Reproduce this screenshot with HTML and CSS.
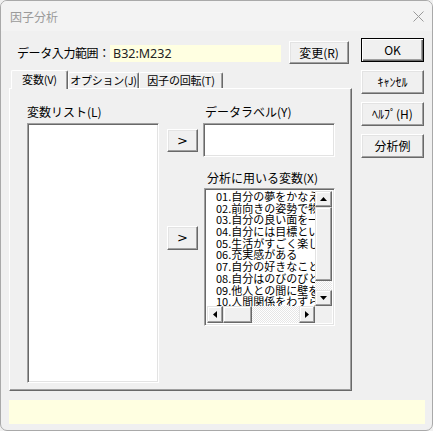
FILE: index.html
```html
<!DOCTYPE html>
<html lang="ja">
<head>
<meta charset="utf-8">
<title>因子分析</title>
<link rel="stylesheet" href="styles.css">
</head>
<body>
<div class="window">
  <div class="titlebar">
    <span class="title">因子分析</span>
    <svg class="close" width="11" height="11" viewBox="0 0 11 11"><path d="M0.5 0.5 L10.5 10.5 M10.5 0.5 L0.5 10.5" stroke="#9a9a9a" stroke-width="1" fill="none"/></svg>
  </div>
  <div class="main">
    <div class="left">
      <div class="range-row">
        <span class="range-label">データ入力範囲：</span>
        <div class="range-field">B32:M232</div>
        <button class="btn change">変更(R)</button>
      </div>
      <div class="tabs">
        <div class="tab tab1 active">変数(V)</div>
        <div class="tab tab2">オプション(J)</div>
        <div class="tab tab3">因子の回転(T)</div>
      </div>
      <div class="panel">
        <div class="col col-list">
          <div class="lbl">変数リスト(L)</div>
          <div class="sunken listbig"></div>
        </div>
        <div class="col col-arrows">
          <button class="btn arrow a1">&gt;</button>
          <button class="btn arrow a2">&gt;</button>
        </div>
        <div class="col col-right">
          <div class="lbl lbl-y">データラベル(Y)</div>
          <div class="sunken textbox"></div>
          <div class="lbl lbl-x">分析に用いる変数(X)</div>
          <div class="sunken vars">
            <div class="vars-grid">
              <ul class="items">
                <li>01.自分の夢をかなえようとしている</li>
                <li>02.前向きの姿勢で物事に取り組む</li>
                <li>03.自分の良い面を一番に考える</li>
                <li>04.自分には目標というものがある</li>
                <li>05.生活がすごく楽しいと感じる</li>
                <li>06.充実感がある</li>
                <li>07.自分の好きなことがやれている</li>
                <li>08.自分はのびのびと生きている</li>
                <li>09.他人との間に壁を感じる</li>
                <li>10.人間関係をわずらわしいと感じる</li>
              </ul>
              <div class="vscroll">
                <div class="sb-btn"><svg width="7" height="4" viewBox="0 0 7 4"><polygon points="3.5,0 7,4 0,4" fill="#000"/></svg></div>
                <div class="sb-thumb v-thumb"></div>
                <div class="sb-track"></div>
                <div class="sb-btn"><svg width="7" height="4" viewBox="0 0 7 4"><polygon points="0,0 7,0 3.5,4" fill="#000"/></svg></div>
              </div>
              <div class="hscroll">
                <div class="sb-btn"><svg width="4" height="7" viewBox="0 0 4 7"><polygon points="4,0 4,7 0,3.5" fill="#000"/></svg></div>
                <div class="sb-thumb h-thumb"></div>
                <div class="sb-track"></div>
                <div class="sb-btn"><svg width="4" height="7" viewBox="0 0 4 7"><polygon points="0,0 4,3.5 0,7" fill="#000"/></svg></div>
              </div>
              <div class="corner"></div>
            </div>
          </div>
        </div>
      </div>
    </div>
    <div class="side">
      <button class="btn default">OK</button>
      <button class="btn">ｷｬﾝｾﾙ</button>
      <button class="btn">ﾍﾙﾌﾟ(H)</button>
      <button class="btn">分析例</button>
    </div>
  </div>
  <div class="status"></div>
</div>
</body>
</html>
```

FILE: styles.css
```css
html, body {
  margin: 0;
  padding: 0;
  background: #f0f0f0;
}

body {
  font-family: "Noto Sans CJK JP", "Noto Sans", sans-serif;
  font-size: 12px;
  color: #000;
}

.window {
  width: 433px;
  height: 431px;
  box-sizing: border-box;
  border: 1px solid #a9a9a9;
  border-radius: 7px;
  background: #f0f0f0;
  overflow: hidden;
}

.titlebar {
  height: 30px;
  background: #f3f3f3;
  display: flex;
  align-items: center;
  justify-content: space-between;
  padding: 0 8px 0 9px;
}

.title {
  color: #9a9a9a;
  font-size: 12px;
  line-height: 14px;
  margin-top: 1px;
}

.close {
  display: block;
}

.main {
  display: flex;
  padding: 7px 0 0 8px;
}

.left {
  width: 343px;
}

.range-row {
  display: flex;
  align-items: center;
  margin-top: 3px;
  height: 23px;
}

.range-label {
  width: 101px;
  flex: none;
  padding-left: 8px;
  box-sizing: border-box;
  font-size: 12px;
  line-height: 14px;
  white-space: nowrap;
  letter-spacing: -0.4px;
  margin-top: 1px;
}

.range-field {
  width: 171px;
  flex: none;
  height: 17px;
  margin-top: 2px;
  background: #ffffe1;
  color: #222;
  font-family: "Noto Sans", sans-serif;
  font-size: 12.5px;
  line-height: 17px;
  padding-left: 3px;
  box-sizing: border-box;
}

.btn {
  box-sizing: border-box;
  background: #f0f0f0;
  border: 1px solid;
  border-color: #fff #696969 #696969 #fff;
  box-shadow: inset -1px -1px #a0a0a0, inset 1px 1px #e3e3e3;
  font-family: "Noto Sans CJK JP", "Noto Sans", sans-serif;
  font-size: 12px;
  color: #000;
  padding: 0;
  margin: 0;
  display: flex;
  align-items: center;
  justify-content: center;
  line-height: 14px;
}

.change {
  width: 60px;
  height: 23px;
  margin-left: 8px;
  flex: none;
}

.tabs {
  display: flex;
  align-items: flex-start;
  height: 19px;
  margin-top: 6px;
  margin-bottom: -1px;
  padding-left: 2px;
  position: relative;
  z-index: 1;
}

.tab {
  box-sizing: border-box;
  height: 16px;
  margin-top: 2px;
  border-top: 1px solid #fff;
  border-left: 1px solid #fff;
  border-right: 1px solid #696969;
  box-shadow: inset -1px 0 #a0a0a0;
  background: #f0f0f0;
  text-align: center;
  font-size: 11px;
  letter-spacing: -0.2px;
  line-height: 15px;
  white-space: nowrap;
  border-radius: 2px 2px 0 0;
  flex: none;
}

.tab.active {
  height: 19px;
  margin-top: 0;
  line-height: 17px;
}

.tab1 { width: 57px; }
.tab2 { width: 71px; }
.tab3 { width: 84px; }

.panel {
  box-sizing: border-box;
  width: 343px;
  height: 303px;
  border-top: 1px solid #fff;
  border-left: 1px solid #fff;
  border-right: 1px solid #696969;
  border-bottom: 1px solid #696969;
  box-shadow: inset -1px -1px #a0a0a0;
  display: flex;
  padding: 15px 0 0 17px;
}

.col {
  display: flex;
  flex-direction: column;
}

.col-list {
  width: 132px;
}

.lbl {
  line-height: 16px;
  height: 16px;
  white-space: nowrap;
}

.sunken {
  box-sizing: border-box;
  background: #fff;
  border: 1px solid;
  border-color: #a0a0a0 #fff #fff #a0a0a0;
  box-shadow: inset 1px 1px #696969, inset -1px -1px #e3e3e3;
}

.listbig {
  margin-top: 3px;
  width: 132px;
  height: 260px;
}

.col-arrows {
  width: 31px;
  margin-left: 8px;
}

.arrow {
  width: 31px;
  font-family: "DejaVu Sans", sans-serif;
  font-size: 13px;
}

.a1 {
  height: 23px;
  margin-top: 25px;
}

.a2 {
  height: 24px;
  margin-top: 74px;
}

.col-right {
  width: 132px;
  margin-left: 5px;
}

.lbl-y {
  padding-left: 2px;
}

.textbox {
  margin-top: 3px;
  width: 132px;
  height: 34px;
}

.lbl-x {
  margin-top: 13px;
  padding-left: 4px;
}

.vars {
  margin-top: 2px;
  margin-left: 1px;
  width: 131px;
  height: 138px;
  padding: 2px;
}

.vars-grid {
  display: grid;
  grid-template-columns: 1fr 17px;
  grid-template-rows: 1fr 17px;
  width: 100%;
  height: 100%;
}

.items {
  list-style: none;
  margin: 0;
  padding: 0 0 0 9px;
  overflow: hidden;
  font-size: 11px;
  line-height: 11.7px;
}

.items li {
  white-space: nowrap;
  height: 11.7px;
}

.vscroll {
  display: flex;
  flex-direction: column;
}

.hscroll {
  display: flex;
}

.sb-btn {
  box-sizing: border-box;
  width: 17px;
  height: 16px;
  background: #f0f0f0;
  border: 1px solid;
  border-color: #e3e3e3 #696969 #696969 #e3e3e3;
  box-shadow: inset -1px -1px #a0a0a0, inset 1px 1px #fff;
  display: flex;
  align-items: center;
  justify-content: center;
  flex: none;
}

.hscroll .sb-btn {
  width: 16px;
  height: 17px;
}

.sb-btn svg {
  display: block;
}

.sb-thumb {
  box-sizing: border-box;
  background: #f0f0f0;
  border: 1px solid;
  border-color: #e3e3e3 #696969 #696969 #e3e3e3;
  box-shadow: inset -1px -1px #a0a0a0, inset 1px 1px #fff;
  flex: none;
}

.v-thumb {
  height: 74px;
}

.h-thumb {
  width: 29px;
}

.sb-track {
  flex: 1;
  background: repeating-conic-gradient(#ffffff 0 25%, #e6e6e6 0 50%) 0 0 / 2px 2px;
}

.corner {
  background: #f0f0f0;
}

.side {
  width: 63px;
  margin-left: 9px;
  display: flex;
  flex-direction: column;
}

.side .btn {
  width: 63px;
  height: 24px;
  margin-bottom: 8px;
}

.btn.default {
  border: 1px solid #000;
  box-shadow: inset 1px 1px #fff, inset -1px -1px #696969, inset -2px -2px #a0a0a0;
}

.status {
  margin: 9px 0 0 8px;
  width: 416px;
  height: 24px;
  background: #ffffe1;
}
```
